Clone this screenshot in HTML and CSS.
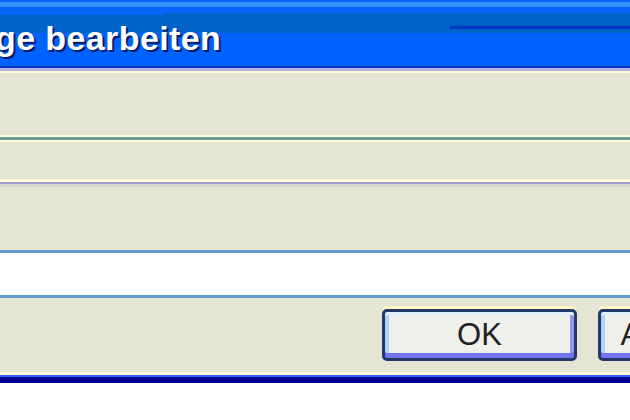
FILE: index.html
```html
<!DOCTYPE html>
<html lang="de">
<head>
<meta charset="utf-8">
<title>bearbeiten</title>
<link rel="stylesheet" href="styles.css">
</head>
<body>
<div class="window">
  <div class="titlebar"><span class="title">ge bearbeiten</span></div>
  <div class="rule r-dark"></div>
  <div class="rule r-lav"></div>
  <div class="rule r-cream2"></div>
  <div class="panel p1"></div>
  <div class="rule r-cream2"></div>
  <div class="rule r-teal"></div>
  <div class="rule r-cream2"></div>
  <div class="panel p2"></div>
  <div class="rule r-cream3"></div>
  <div class="rule r-lav2"></div>
  <div class="rule r-gray"></div>
  <div class="panel p3"></div>
  <div class="rule r-blue"></div>
  <div class="field"></div>
  <div class="rule r-blue"></div>
  <div class="panel buttons">
    <button class="btn">OK</button>
    <button class="btn">Abbrechen</button>
  </div>
  <div class="rule r-cream3"></div>
  <div class="rule r-bright"></div>
  <div class="rule r-navy"></div>
</div>
</body>
</html>
```
FILE: styles.css
```css
html, body {
  margin: 0;
  padding: 0;
  background: #ffffff;
}
body {
  width: 630px;
  height: 420px;
  overflow: hidden;
}
.window {
  display: flex;
  flex-direction: column;
  width: 630px;
}
.titlebar {
  position: relative;
  height: 66px;
  box-sizing: border-box;
  padding-top: 18px;
  background:
    linear-gradient(to bottom,
      #0764f4 0, #0764f4 2px,
      #3592ff 2px, #3592ff 7px,
      #0565fb 7px, #0565fb 13px,
      #0063c8 13px, #0063c8 33px,
      #0062fc 33px, #0062fc 66px);
  white-space: nowrap;
}
.titlebar::before {
  content: "";
  position: absolute;
  left: 0;
  top: 13px;
  width: 163px;
  height: 2px;
  background: #0565fb;
}
.titlebar::after {
  content: "";
  position: absolute;
  left: 450px;
  right: 0;
  top: 26px;
  height: 3px;
  background: #0336c4;
}
.title {
  position: relative;
  display: block;
  margin-left: -5px;
  font-family: "Liberation Sans", Arial, sans-serif;
  font-weight: bold;
  font-size: 34px;
  line-height: 40px;
  letter-spacing: 0.4px;
  color: #ffffff;
  text-shadow: 2px 2px 0 #0a1a66;
}
.rule { flex: none; }
.r-dark { height: 2px; background: #0733c8; }
.r-lav { height: 3px; background: #b6b1dd; }
.r-cream2 { height: 2px; background: #fffbdc; }
.r-cream3 { height: 3px; background: #fffbd8; }
.r-teal { height: 3px; background: #6b9a98; }
.r-lav2 { height: 2px; background: #a09ccc; }
.r-gray { height: 3px; background: #d7d7cf; }
.r-blue { height: 3px; background: #6699cc; }
.r-bright { height: 2px; background: #3366ff; }
.r-navy { height: 6px; background: #000090; }
.panel { background: #e5e5d3; flex: none; }
.p1 { height: 62px; }
.p2 { height: 37px; }
.p3 { height: 63px; }
.field { height: 42px; background: #ffffff; }
.buttons {
  height: 74px;
  display: flex;
  align-items: center;
  gap: 21px;
  padding-left: 382px;
  box-sizing: border-box;
  overflow: hidden;
}
.btn {
  flex: none;
  width: 195px;
  height: 52px;
  box-sizing: border-box;
  border: 3px solid #22386a;
  border-radius: 5px;
  background: #efefec;
  box-shadow:
    inset 0 3px 0 #dff0ff,
    inset 0 -5px 0 #7472ee,
    inset 4px 0 0 #aed2f8,
    inset -4px 0 0 #9896e6,
    0 -4px 0 -1px #fff8c6;
  font-family: "Liberation Sans", Arial, sans-serif;
  font-size: 31px;
  color: #222222;
  padding: 0;
  display: flex;
  align-items: center;
  justify-content: center;
}
```
